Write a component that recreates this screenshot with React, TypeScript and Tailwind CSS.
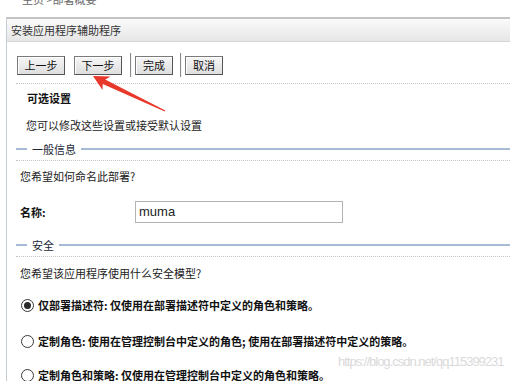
import React from "react";

const font = { fontFamily: '"Noto Sans CJK SC", "Noto Sans", sans-serif' };

function Btn({ label, w }: { label: string; w: string }) {
  return (
    <div
      className={`${w} h-[19px] flex items-center justify-center border border-[#7a7a7a] border-r-[#555] border-b-[#555] bg-gradient-to-b from-[#f6f6f6] to-[#dedede] text-[11px] leading-none text-[#111] shadow-[inset_1px_1px_0_#ffffff]`}
    >
      {label}
    </div>
  );
}

function Sep() {
  return <div className="w-[2px] h-[24px] border-l border-[#8a8a8a] border-r border-r-[#f4f4f4]" />;
}

function Section({ title }: { title: string }) {
  return (
    <div className="ml-[9px] flex items-center h-[16px]">
      <div className="w-[11px] h-[2px] bg-[#a6bbd5]" />
      <span className="mx-[5px] text-[11px] leading-[16px] text-[#1c2838]">{title}</span>
      <div className="flex-1 h-[2px] bg-[#a6bbd5]" />
    </div>
  );
}

function Dotted({ className = "" }: { className?: string }) {
  return <div className={`ml-[9px] border-t border-dotted border-[#c4c4c4] ${className}`} />;
}

function Radio({ checked, label, className = "" }: { checked?: boolean; label: string; className?: string }) {
  return (
    <div className={`flex items-center h-[16px] ml-[14px] ${className}`}>
      <div className="w-[13px] h-[13px] rounded-full border border-[#3a3a3a] bg-white flex items-center justify-center">
        {checked && <div className="w-[7px] h-[7px] rounded-full bg-[#2a2a2a]" />}
      </div>
      <span className="ml-[4px] text-[11px] font-bold leading-[16px] text-[#111] whitespace-nowrap">{label}</span>
    </div>
  );
}

export default function App() {
  return (
    <div className="relative w-[510px] h-[381px] overflow-hidden bg-white" style={font}>
      <div className="h-[17px] overflow-hidden">
        <div className="pl-[22px] -mt-[6px] text-[11px] leading-[11px] text-[#666]">主页 &gt;部署概要</div>
      </div>
      <div className="ml-[6px] border-l border-[#c6ccd4] border-t-2 border-t-[#c4c4c4] h-[364px]">
        <div className="h-[23px] border-b border-[#d6d6d6] bg-gradient-to-b from-[#fafafa] to-[#e6e6e6] pl-[4px] text-[11px] leading-[22px] text-[#333]">
          安装应用程序辅助程序
        </div>
        <div className="pt-[11px]">
          <div className="flex items-center h-[24px] pl-[10px]">
            <Btn label="上一步" w="w-[48px]" />
            <div className="ml-[9px]">
              <Btn label="下一步" w="w-[48px]" />
            </div>
            <div className="ml-[8px]">
              <Sep />
            </div>
            <div className="ml-[3px]">
              <Btn label="完成" w="w-[38px]" />
            </div>
            <div className="ml-[7px]">
              <Sep />
            </div>
            <div className="ml-[3px]">
              <Btn label="取消" w="w-[38px]" />
            </div>
          </div>
          <Dotted className="mt-[6px]" />
          <div className="mt-[6px] ml-[20px] text-[11px] font-bold leading-[16px] text-[#111]">可选设置</div>
          <div className="mt-[11px] ml-[19px] text-[11px] leading-[16px] text-[#222]">您可以修改这些设置或接受默认设置</div>
          <div className="mt-[8px]">
            <Section title="一般信息" />
          </div>
          <Dotted className="mt-[3px]" />
          <div className="mt-[7px] ml-[13px] text-[11px] leading-[16px] text-[#222]">您希望如何命名此部署?</div>
          <div className="mt-[17px] flex items-center h-[22px]">
            <div className="ml-[13px] w-[115px] text-[11px] font-bold leading-[16px] text-[#111]">名称:</div>
            <div
              className="w-[208px] h-[22px] border border-[#b3b3b3] pl-[3px] text-[13px] leading-[20px] text-[#222]"
              style={{ fontFamily: '"Liberation Sans", Arial, sans-serif' }}
            >
              muma
            </div>
          </div>
          <div className="mt-[14px]">
            <Section title="安全" />
          </div>
          <Dotted className="mt-[3px]" />
          <div className="mt-[8px] ml-[13px] text-[11px] leading-[16px] text-[#222]">您希望该应用程序使用什么安全模型?</div>
          <Radio className="mt-[16px]" checked label="仅部署描述符: 仅使用在部署描述符中定义的角色和策略。" />
          <Radio className="mt-[20px]" label="定制角色: 使用在管理控制台中定义的角色; 使用在部署描述符中定义的策略。" />
          <Radio className="mt-[18px]" label="定制角色和策略: 仅使用在管理控制台中定义的角色和策略。" />
        </div>
      </div>
      <div
        className="absolute left-[338px] top-[354px] text-[13px] leading-[16px] tracking-[-1px] text-[#dadada] whitespace-nowrap"
        style={{ fontFamily: '"Liberation Sans", Arial, sans-serif' }}
      >
        https://blog.csdn.net/qq115399231
      </div>
      <svg className="absolute left-0 top-0" width="510" height="381" viewBox="0 0 510 381">
        <polygon
          points="93,76 110.5,76.5 105.2,79.4 165.3,110.4 164.7,111.6 102.7,84 102.5,90"
          fill="#e8382c"
        />
      </svg>
    </div>
  );
}
